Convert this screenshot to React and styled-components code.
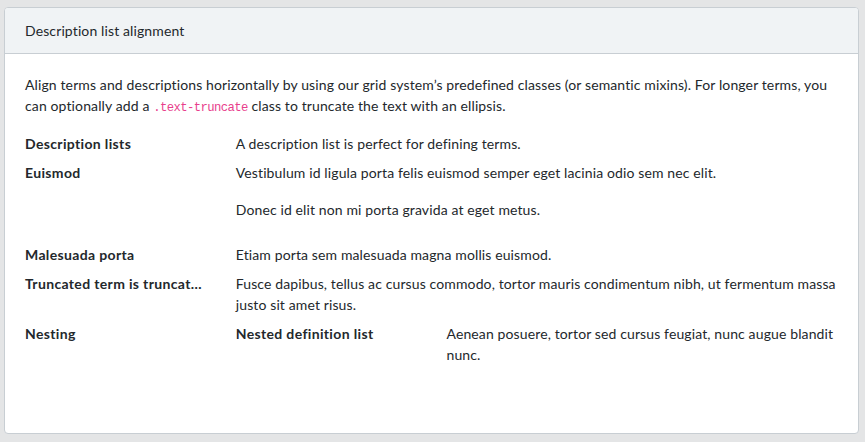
import React from "react";
import styled, { createGlobalStyle } from "styled-components";

const GlobalStyle = createGlobalStyle`
    html, body {
        margin: 0;
        padding: 0;
        background: #e4e5e6;
    }
    body {
        font-family: Lato, "Noto Sans", sans-serif;
        font-size: 14px;
        line-height: 1.5;
        letter-spacing: 0.12px;
        font-variant-ligatures: none;
        color: #23282c;
    }
`;

const Page = styled.div`
    padding: 7px 6px 9px 4px;
`;

const Card = styled.div`
    background: #fff;
    border: 1px solid #c8ced3;
    border-radius: 4px;
    overflow: hidden;
`;

const CardHeader = styled.div`
    padding: 12px 20px;
    background: #f0f3f5;
    border-bottom: 1px solid #c8ced3;
`;

const CardBody = styled.div`
    padding: 20px;
`;

const Lead = styled.p`
    margin: 0 0 16px;
`;

const Code = styled.code`
    font-family: "Liberation Mono", "DejaVu Sans Mono", monospace;
    font-size: 87.5%;
    letter-spacing: -0.6px;
    color: #e83e8c;
`;

const Row = styled.dl`
    display: grid;
    grid-template-columns: ${p => (p.nested ? "1fr 2fr" : "1fr 3fr")};
    margin: 0 -15px 16px;
`;

const Term = styled.dt`
    grid-column: 1;
    padding: 0 15px;
    font-weight: 700;
    letter-spacing: 0.35px;
    min-width: 0;
    ${p =>
        p.truncate &&
        `
        overflow: hidden;
        text-overflow: ellipsis;
        white-space: nowrap;
    `}
`;

const Desc = styled.dd`
    grid-column: 2;
    margin: 0 0 8px;
    padding: 0 15px;
    min-width: 0;
    p {
        margin: 0 0 16px;
    }
`;

export default function App() {
    return (
        <Page>
            <GlobalStyle />
            <Card>
                <CardHeader>Description list alignment</CardHeader>
                <CardBody>
                    <Lead>
                        Align terms and descriptions horizontally by using our grid system’s
                        predefined classes (or semantic mixins). For longer terms, you can
                        optionally add a <Code>.text-truncate</Code> class to truncate the text
                        with an ellipsis.
                    </Lead>
                    <Row>
                        <Term>Description lists</Term>
                        <Desc>A description list is perfect for defining terms.</Desc>

                        <Term>Euismod</Term>
                        <Desc>
                            <p>Vestibulum id ligula porta felis euismod semper eget lacinia odio sem nec elit.</p>
                            <p>Donec id elit non mi porta gravida at eget metus.</p>
                        </Desc>

                        <Term>Malesuada porta</Term>
                        <Desc>Etiam porta sem malesuada magna mollis euismod.</Desc>

                        <Term truncate>Truncated term is truncated</Term>
                        <Desc>
                            Fusce dapibus, tellus ac cursus commodo, tortor mauris condimentum
                            nibh, ut fermentum massa justo sit amet risus.
                        </Desc>

                        <Term>Nesting</Term>
                        <Desc>
                            <Row nested>
                                <Term>Nested definition list</Term>
                                <Desc>
                                    Aenean posuere, tortor sed cursus feugiat, nunc augue blandit
                                    nunc.
                                </Desc>
                            </Row>
                        </Desc>
                    </Row>
                </CardBody>
            </Card>
        </Page>
    );
}
